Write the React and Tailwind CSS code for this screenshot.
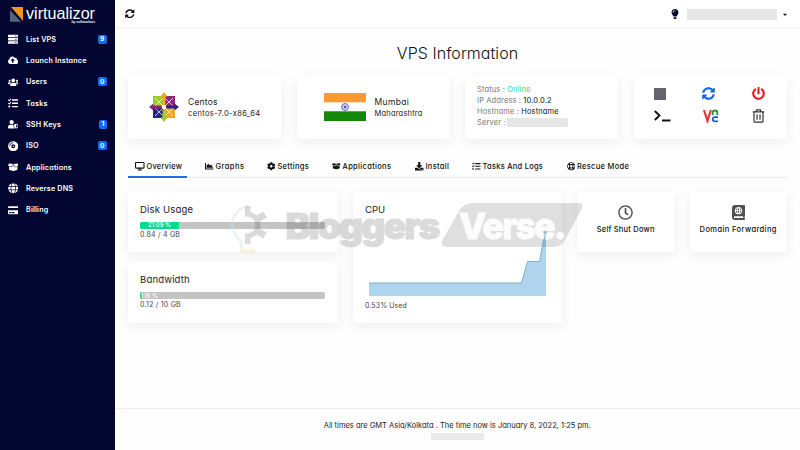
import React from "react";
import {
  FaServer, FaCloudUploadAlt, FaUsers, FaTasks, FaUserShield, FaCompactDisc, FaBoxOpen, FaGlobe,
  FaCreditCard, FaChartArea, FaCog, FaDownload, FaRegLifeRing, FaSyncAlt, FaPowerOff,
  FaRegClock, FaAtlas, FaLightbulb, FaCaretDown,
} from "react-icons/fa";

const MENU = [
  { icon: FaServer, label: "List VPS", badge: "9" },
  { icon: FaCloudUploadAlt, label: "Launch Instance" },
  { icon: FaUsers, label: "Users", badge: "0" },
  { icon: FaTasks, label: "Tasks" },
  { icon: FaUserShield, label: "SSH Keys", badge: "1" },
  { icon: FaCompactDisc, label: "ISO", badge: "0" },
  { icon: FaBoxOpen, label: "Applications" },
  { icon: FaGlobe, label: "Reverse DNS" },
  { icon: FaCreditCard, label: "Billing" },
];

function Monitor({ className }) {
  return (
    <svg viewBox="0 0 18 16" className={className} fill="none" stroke="currentColor" strokeWidth="2">
      <rect x="1" y="1" width="16" height="10.5" rx="1" />
      <path d="M9 11v3.5M5 15h8" />
    </svg>
  );
}

const TABS = [
  { icon: Monitor, label: "Overview", width: "w-[70px]", tracking: "tracking-[0.18px]", active: true },
  { icon: FaChartArea, label: "Graphs", width: "w-[62px]", tracking: "tracking-[0.45px]" },
  { icon: FaCog, label: "Settings", width: "w-[65px]", tracking: "tracking-[0.28px]" },
  { icon: FaBoxOpen, label: "Applications", width: "w-[83px]", tracking: "tracking-[0.33px]" },
  { icon: FaDownload, label: "Install", width: "w-[57px]", tracking: "tracking-[0.32px]" },
  { icon: FaTasks, label: "Tasks And Logs", width: "w-[94.5px]", tracking: "tracking-[0.25px]" },
  { icon: FaRegLifeRing, label: "Rescue Mode", width: "w-[80px]", tracking: "tracking-[0.3px]" },
];

function Card({ className = "", children }) {
  return (
    <div className={`rounded-[3px] bg-white shadow-[0_3px_12px_rgba(0,0,0,0.07)] ${className}`}>{children}</div>
  );
}

function Logo() {
  return (
    <div className="flex h-[28.5px] pl-[10px] pt-[5px]">
      <svg viewBox="0 0 14 17" className="mt-[1px] h-[17px] w-[14px] shrink-0">
        <path d="M1 1H13V15Z" fill="#f7941e" />
        <path d="M0 4V15.8H11Z" fill="#56617c" />
      </svg>
      <svg viewBox="0 0 72 19" className="ml-[1px] h-[19px] w-[72px] overflow-visible" fill="#fff">
        <text x="1" y="14" fontSize="17" textLength="69" lengthAdjust="spacingAndGlyphs" fontFamily="Liberation Sans, sans-serif">virtualizor</text>
        <text x="46.5" y="17.500" fontSize="3.5" fontWeight="700" textLength="23.5" lengthAdjust="spacingAndGlyphs" fontFamily="Liberation Sans, sans-serif">by softaculous</text>
      </svg>
    </div>
  );
}

function Sidebar() {
  return (
    <aside className="flex w-[114.5px] shrink-0 flex-col bg-[#020630] text-white">
      <Logo />
      <nav className="flex flex-col">
        {MENU.map(({ icon: Icon, label, badge }) => (
          <div key={label} className="flex h-[21.35px] items-center pl-[7.5px] pr-2">
            <span className="flex w-[18.5px] items-center"><Icon className="h-[10.5px] w-auto min-w-[10px] max-w-[12.5px]" /></span>
            <span className="text-[7.2px] font-semibold leading-none tracking-[0.18px]">{label}</span>
            {badge && (
              <span className="ml-auto flex h-[9px] items-center rounded-[2px] bg-[#0d6efd] px-[2.2px] text-[6.5px] font-bold leading-none">{badge}</span>
            )}
          </div>
        ))}
      </nav>
    </aside>
  );
}

function CentosLogo() {
  return (
    <svg viewBox="0 0 60 60" className="h-[30px] w-[30px] shrink-0">
      <rect x="8" y="8" width="20.5" height="20.5" fill="#9ccd2a" />
      <rect x="31.500" y="8" width="20.5" height="20.5" fill="#932279" />
      <rect x="8" y="31.500" width="20.5" height="20.5" fill="#262577" />
      <rect x="31.500" y="31.500" width="20.5" height="20.5" fill="#efa724" />
      <g stroke="#fff" strokeWidth="1.300" fill="none">
        <path d="M12 12 48 48M48 12 12 48" strokeWidth="1.500" />
        <path d="M30 10 50 30 30 50 10 30Z" />
      </g>
      <path d="M30 0 37 9H33V24L30 27 27 24V9H23Z" fill="#efa724" />
      <path d="M60 30 51 37V33H36L33 30 36 27H51V23Z" fill="#262577" />
      <path d="M30 60 23 51H27V36L30 33 33 36V51H37Z" fill="#9ccd2a" />
      <path d="M0 30 9 23V27H24L27 30 24 33H9V37Z" fill="#932279" />
      <circle cx="30" cy="30" r="4" fill="#fff" />
    </svg>
  );
}

function IndiaFlag() {
  return (
    <svg viewBox="0 0 42 28" className="h-[28px] w-[42px] shrink-0">
      <rect width="42" height="28" fill="#fff" />
      <rect width="42" height="9.3" fill="#ff9933" />
      <rect y="18.300" width="42" height="9.700" fill="#138808" />
      <circle cx="21" cy="14" r="3.500" fill="#dcdcf4" stroke="#5553b5" strokeWidth="0.8" />
      <path d="M21 10.500V17.500M17.500 14H24.500M18.500 11.500 23.500 16.500M23.500 11.500 18.500 16.500" stroke="#7775c6" strokeWidth="0.4" />
      <circle cx="21" cy="14" r="1" fill="#3533a0" />
    </svg>
  );
}

function Actions() {
  return (
    <div className="grid grid-cols-[48px_50px_1fr] grid-rows-[22px_22px] items-center pl-[20px] pt-[7px]">
      <span className="h-[12px] w-[12px] bg-[#66636f]" />
      <FaSyncAlt className="h-[13px] w-[13px] text-[#0d66f0]" />
      <FaPowerOff className="h-[13px] w-[13px] text-[#f01414]" />
      <svg viewBox="0 0 17 12" className="h-[12px] w-[17px]" fill="none" stroke="#111" strokeWidth="1.900">
        <path d="M.8 1 5.500 5.500 .8 10M8 10.500H16.500" />
      </svg>
      <svg viewBox="0 0 17 14" className="h-[14px] w-[17px]" fill="none" strokeWidth="2.200">
        <path d="M2 1 5.500 12 8.800 1" stroke="#e5383c" />
        <path d="M10.700 6V1.500M10.700 3.300Q11.300 1.500 13.200 1.500 15.300 1.500 15.300 4V6" stroke="#1c9a2c" strokeWidth="1.800" />
        <path d="M16 8.200H13Q10.700 8.200 10.700 10.300T13 12.400H16" stroke="#1763d6" strokeWidth="1.800" />
      </svg>
      <svg viewBox="0 0 13 14" className="h-[14px] w-[13px]" fill="none" stroke="#333" strokeWidth="1.200">
        <path d="M.8 2.800H12.200M4 2.800 4.600 .8H8.400L9 2.800M2 3V12.200Q2 13.200 3 13.200H10Q11 13.200 11 12.200V3M5 5.300V10.800M8 5.300V10.800" />
      </svg>
    </div>
  );
}

function Meter({ title, pct, fill, label, used }) {
  return (
    <Card className="h-[60.500px] w-[209.500px] px-[12px] pt-[12px]">
      <div className="text-[9.500px] leading-[12px] tracking-[0.18px] text-[#222]">{title}</div>
      <div className="mt-[6px] h-[7px] w-[185px] overflow-hidden rounded-[2px] bg-[#c4c4c4]">
        <div className={`flex h-full items-center justify-center whitespace-nowrap bg-[#0ad88c] text-[6px] font-medium leading-none text-white ${fill}`}>
          <span className={label}>{pct}</span>
        </div>
      </div>
      <div className="mt-[1px] text-[7px] leading-[9px] tracking-[0.22px] text-[#444]">{used}</div>
    </Card>
  );
}

function Watermark() {
  return (
    <svg viewBox="0 0 360 60" className="pointer-events-none absolute left-[228px] top-[196px] h-[60px] w-[360px]">
      <g fill="none" opacity="0.45">
        <path d="M20 10Q5 14 4 29 5 38 12 44L14 53" stroke="#cfe6f6" strokeWidth="2.500" />
        <path d="M12 55H27" stroke="#f8ecc4" strokeWidth="5" />
      </g>
      <clipPath id="gear-half"><rect x="17" y="0" width="30" height="60" /></clipPath>
      <g opacity="0.16" clipPath="url(#gear-half)" stroke="#222" fill="none">
        <circle cx="19" cy="29" r="11" strokeWidth="5" />
        <path d="M19 18V10M28.500 23.500 37 18.500M28.500 34.500 37 39.500M19 40V48" strokeWidth="7" />
      </g>
      <g opacity="0.16">
        <text x="57.5" y="43" fontFamily="Inter, sans-serif" fontWeight="900" fontSize="36" letterSpacing="-1.800" textLength="153" lengthAdjust="spacingAndGlyphs" fill="#222" stroke="#222" strokeWidth="1">Bloggers</text>
      </g>
      <path d="M245 7H350Q357 7 353 14L337 44Q333 51 326 51H220Q211 51 215 43L231 15Q236 7 245 7Z" fill="#222" fillOpacity="0.145" />
      <text x="231" y="43" fontFamily="Inter, sans-serif" fontWeight="800" fontSize="36" letterSpacing="-1.500" textLength="106" lengthAdjust="spacingAndGlyphs" fill="#fff" stroke="#fff" strokeWidth="1" opacity="0.92">Verse.</text>
      <path d="M314 51V50L317.500 34V51Z" fill="#7fb5cf" fillOpacity="0.8" />
    </svg>
  );
}

function Shortcut({ icon: Icon, label, size, tracking }) {
  return (
    <Card className="flex h-[60.500px] w-[97.500px] flex-col items-center pt-[13px]">
      <Icon className={`${size} text-[#505050]`} />
      <span className={`mt-[5.500px] whitespace-nowrap text-[7.500px] font-medium leading-[10px] text-[#111] ${tracking}`}>{label}</span>
    </Card>
  );
}

export default function App() {
  return (
    <div className="relative flex h-[450px] w-[800px] overflow-hidden bg-[#fefefe] font-[Inter,sans-serif] [font-feature-settings:'cv11']">
      <Sidebar />
      <div className="flex min-w-0 flex-1 flex-col">
        <header className="flex h-[29px] items-center border-b-2 border-[#f7f7f7] bg-white pl-[10.500px] pr-[12px]">
          <FaSyncAlt className="h-[9.500px] w-[9.500px] text-[#111]" />
          <FaLightbulb className="ml-auto h-[10px] w-[8px] text-[#06062e]" />
          <span className="ml-[8px] mt-[1px] h-[11px] w-[90px] bg-[#e7e7e7]" />
          <FaCaretDown className="ml-[5px] mt-[1px] h-[7px] w-[6px] text-[#111]" />
        </header>

        <main className="flex h-[379px] flex-col pl-[13.500px]">
          <h1 className="w-[659px] pt-[14px] text-center text-[16px] font-light leading-[20px] tracking-[0.050px] text-[#111]">VPS Information</h1>

          <section className="mt-[12.500px] flex gap-[15.500px]">
            <Card className="flex h-[63px] w-[153px] items-center pl-[21px]">
              <CentosLogo />
              <div className="ml-[9px] whitespace-nowrap text-[#222]">
                <div className="text-[8.500px] leading-[12px] tracking-[0.200px]">Centos</div>
                <div className="text-[7.500px] leading-[11px] tracking-[0.380px]">centos-7.0-x86_64</div>
              </div>
            </Card>
            <Card className="flex h-[63px] w-[153px] items-center pl-[27.500px]">
              <IndiaFlag />
              <div className="ml-[8.500px] whitespace-nowrap text-[#222]">
                <div className="text-[8.500px] leading-[12px] tracking-[0.350px]">Mumbai</div>
                <div className="text-[7.500px] leading-[11px] tracking-[0.200px]">Maharashtra</div>
              </div>
            </Card>
            <Card className="h-[63px] w-[153px] whitespace-nowrap pl-[12px] pt-[8.500px] text-[7.500px] leading-[11px] tracking-[0.130px] text-[#777]">
              <div>Status : <span className="text-[#1fdc95]">Online</span></div>
              <div>IP Address : <span className="text-[#111]">10.0.0.2</span></div>
              <div>Hostname : <span className="text-[#111]">Hostname</span></div>
              <div className="flex items-center">Server : <span className="ml-[1px] h-[9px] w-[61px] rounded-[1px] bg-[#e6e6e6]" /></div>
            </Card>
            <Card className="h-[63px] w-[153px]"><Actions /></Card>
          </section>

          <nav className="mt-[16px] flex h-[23px] w-[659px] border-b border-[#ececec] text-[#111]">
            {TABS.map(({ icon: Icon, label, width, tracking, active }) => (
              <div key={label} className={`h-[23px] shrink-0 ${width}`}>
                <div className={`flex h-[23px] items-center whitespace-nowrap pl-[7px] text-[7.500px] font-medium leading-none ${tracking} ${active ? "w-[59px] border-b-2 border-[#1a6fe8] pt-[3px]" : "pt-[1px]"}`}>
                  <Icon className="mr-[2px] h-[8.500px] w-auto" />
                  {label}
                </div>
              </div>
            ))}
          </nav>

          <section className="mt-[14px] flex gap-[15px]">
            <div className="flex flex-col gap-[10px]">
              <Meter title="Disk Usage" pct="21.09 %" fill="w-[39px]" label="" used="0.84 / 4 GB" />
              <Meter title="Bandwidth" pct="1.16 %" fill="w-[1.500px]" label="pl-[17px]" used="0.12 / 10 GB" />
            </div>
            <Card className="flex h-[131px] w-[209.500px] flex-col pl-[12.500px] pt-[12px]">
              <div className="text-[9.500px] leading-[12px] text-[#222]">CPU</div>
              <svg viewBox="0 0 178 72" className="ml-[4px] mt-[8px] h-[72px] w-[178px]">
                <path d="M0 72V59H152.500L158.500 37.500H170.500L177 3V72Z" fill="#afd5ee" />
                <path d="M0 59H152.500L158.500 37.500H170.500L177 3" fill="none" stroke="#80aecb" strokeWidth="1" />
              </svg>
              <div className="mt-[5px] text-[7px] leading-[9px] tracking-[0.100px] text-[#444]">0.53% Used</div>
            </Card>
            <Shortcut icon={FaRegClock} label="Self Shut Down" size="h-[15px] w-[15px]" tracking="tracking-[0.220px]" />
            <Shortcut icon={FaAtlas} label="Domain Forwarding" size="h-[15px] w-[13px]" tracking="tracking-[0.400px]" />
          </section>
        </main>

        <footer className="flex flex-1 flex-col items-center border-t border-[#ececec] pt-[12px]">
          <div className="whitespace-nowrap text-[7.500px] leading-[9px] text-[#222]">All times are GMT Asia/Kolkata . The time now is January 8, 2022, 1:25 pm.</div>
          <div className="mt-[3px] h-[7px] w-[53px] bg-[#e9e9e9]" />
        </footer>
      </div>
      <Watermark />
    </div>
  );
}
